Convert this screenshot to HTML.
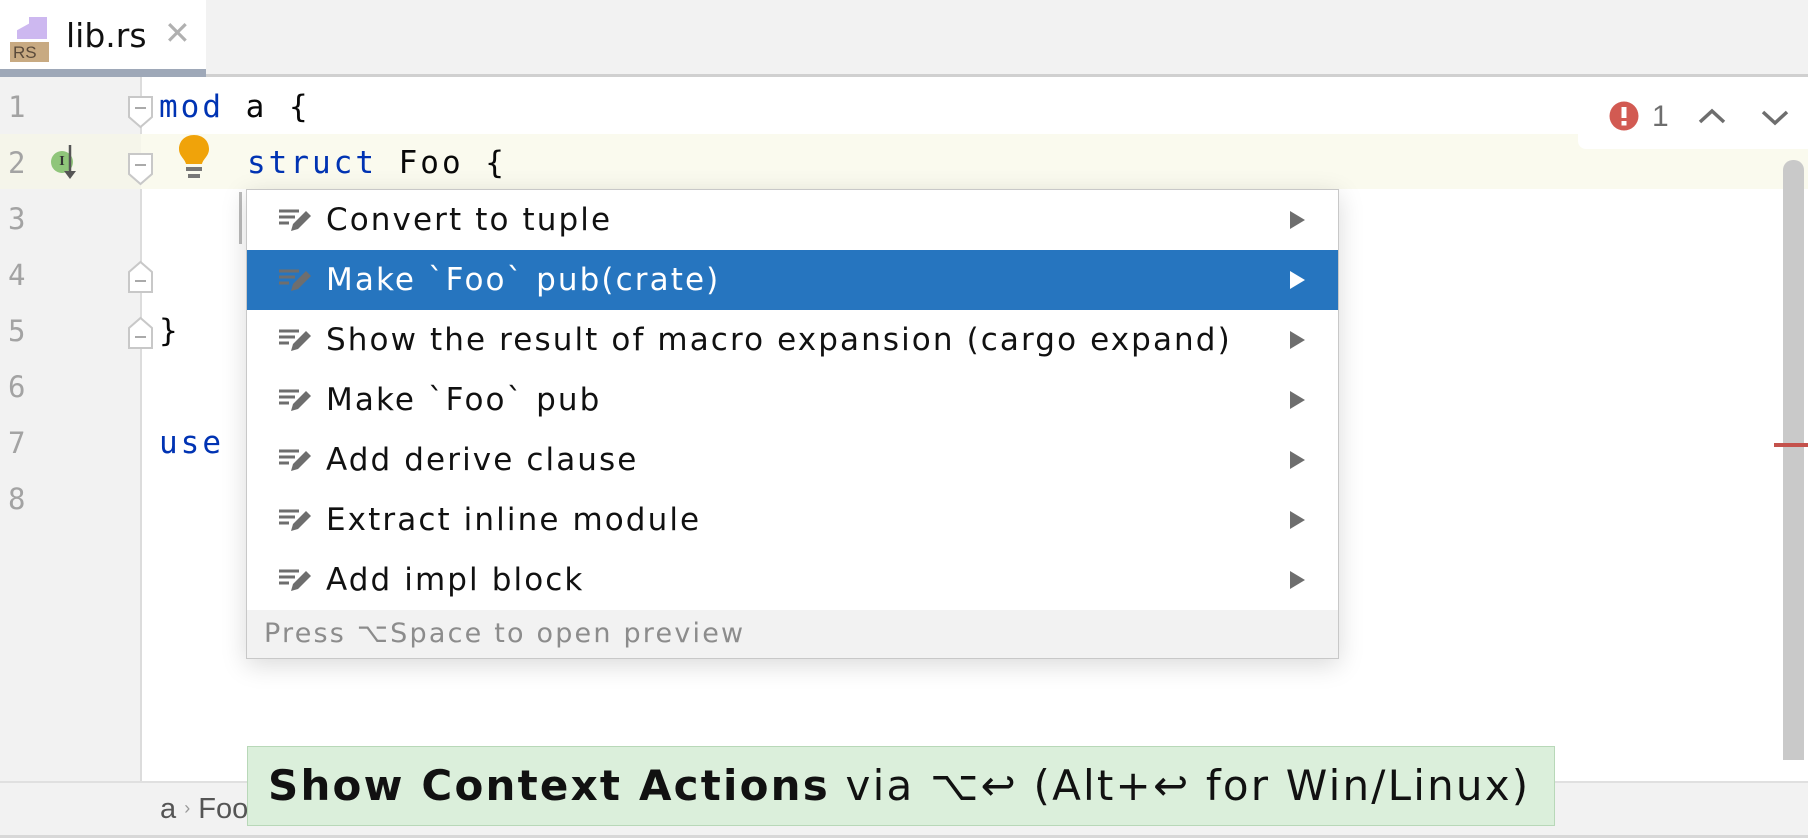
<!DOCTYPE html>
<html><head><meta charset="utf-8"><style>
*{margin:0;padding:0;box-sizing:border-box}
body{width:1808px;height:838px;overflow:hidden;background:#fff;position:relative;font-family:"Liberation Sans",sans-serif}
.abs{position:absolute}
.mono{font-family:"DejaVu Sans Mono","Liberation Mono",monospace;font-size:31px;white-space:pre;letter-spacing:3px}
.ln{position:absolute;left:8px;width:40px;color:#a3a3a3;font-family:"DejaVu Sans Mono",monospace;font-size:29px}
.item{position:absolute;left:0;width:1091px;height:60px;font-family:"DejaVu Sans",sans-serif;font-size:31px;color:#111;line-height:60px;padding-left:79px;white-space:nowrap;letter-spacing:2.1px}
.item svg.ic{position:absolute;left:30px;top:16px}
.item .ar{position:absolute;right:33px;top:21px;width:0;height:0;border-left:15px solid #6e6e6e;border-top:9px solid transparent;border-bottom:9px solid transparent}
.sel{background:#2675bf;color:#fff}
.sel .ar{border-left-color:#fff}
</style></head><body>
<div class="abs" style="left:0;top:0;width:1808px;height:77px;background:#f2f2f2"></div>
<div class="abs" style="left:0;top:74px;width:1808px;height:3px;background:#d0d0d0"></div>
<div class="abs" style="left:0;top:0;width:206px;height:71px;background:#fff"></div>
<div class="abs" style="left:0;top:69px;width:206px;height:8px;background:#9ea8b8"></div>
<div class="abs" style="left:17px;top:17px;width:30px;height:22px;background:#cdb8f0;clip-path:polygon(0 100%,100% 100%,100% 0,40% 0,40% 30%,0 60%)"></div>
<div class="abs" style="left:10px;top:42px;width:39px;height:20px;background:#c8aa82;font-size:17px;color:#5a4a3a;line-height:22px;padding-left:3px">RS</div>
<div class="abs" style="left:66px;top:16px;font-family:'DejaVu Sans',sans-serif;font-size:33px;color:#111">lib.rs</div>
<div class="abs" style="left:164px;top:14px;font-size:32px;color:#b0b0b0">✕</div>

<div class="abs" style="left:0;top:77px;width:141px;height:705px;background:#f2f2f2"></div>
<div class="abs" style="left:140px;top:77px;width:2px;height:705px;background:#dcdcdc"></div>
<div class="abs" style="left:0;top:134px;width:1808px;height:55px;background:#fafaee"></div>
<div class="abs" style="left:0;top:134px;width:141px;height:55px;background:#f5f5ea"></div>

<div class="ln" style="top:90px">1</div>
<div class="ln" style="top:146px">2</div>
<div class="ln" style="top:202px">3</div>
<div class="ln" style="top:258px">4</div>
<div class="ln" style="top:314px">5</div>
<div class="ln" style="top:370px">6</div>
<div class="ln" style="top:426px">7</div>
<div class="ln" style="top:482px">8</div>

<div class="abs" style="left:51px;top:151px;width:22px;height:22px;border-radius:50%;background:#8fc57a;font-size:14px;font-weight:bold;color:#333;text-align:center;line-height:22px;font-family:'Liberation Serif',serif">I</div>
<svg class="abs" style="left:62px;top:143px" width="18" height="38"><path d="M8 2V32" stroke="#555" stroke-width="2.5"/><path d="M2 28L8 36L14 28Z" fill="#555"/></svg>
<svg class="abs" style="left:127px;top:95px" width="28" height="34"><path d="M2 2H25V22L13.5 32L2 22Z" fill="#fff" stroke="#c8c8c8" stroke-width="2"/><path d="M8 13H19" stroke="#aaa" stroke-width="2"/></svg>
<svg class="abs" style="left:127px;top:152px" width="28" height="34"><path d="M2 2H25V22L13.5 32L2 22Z" fill="#fff" stroke="#c8c8c8" stroke-width="2"/><path d="M8 13H19" stroke="#aaa" stroke-width="2"/></svg>
<svg class="abs" style="left:127px;top:260px" width="28" height="34"><path d="M2 32H25V12L13.5 2L2 12Z" fill="#fff" stroke="#c8c8c8" stroke-width="2"/><path d="M8 21H19" stroke="#aaa" stroke-width="2"/></svg>
<svg class="abs" style="left:127px;top:316px" width="28" height="34"><path d="M2 32H25V12L13.5 2L2 12Z" fill="#fff" stroke="#c8c8c8" stroke-width="2"/><path d="M8 21H19" stroke="#aaa" stroke-width="2"/></svg>
<svg class="abs" style="left:176px;top:134px" width="36" height="46"><path d="M18 1C9 1 3 7 3 15C3 22 9 25 10 30H26C27 25 33 22 33 15C33 7 27 1 18 1Z" fill="#f0a30a"/><rect x="10" y="33" width="16" height="4" fill="#777"/><rect x="12" y="40" width="12" height="4" fill="#777"/></svg>

<div class="abs mono" style="left:159px;top:89px;color:#0033b3">mod<span style="color:#080808"> a {</span></div>
<div class="abs mono" style="left:247px;top:145px;color:#0033b3">struct<span style="color:#080808"> Foo {</span></div>
<div class="abs mono" style="left:159px;top:313px;color:#080808">}</div>
<div class="abs mono" style="left:159px;top:425px;color:#0033b3">use</div>
<div class="abs" style="left:239px;top:192px;width:3px;height:52px;background:#bbb"></div>

<div class="abs" style="left:1578px;top:77px;width:230px;height:72px;background:#fff;border-radius:0 0 0 8px"></div>
<svg class="abs" style="left:1609px;top:101px" width="30" height="30"><circle cx="15" cy="15" r="14.5" fill="#d25a52"/><rect x="12.5" y="6" width="5" height="11" fill="#fff"/><rect x="12.5" y="20" width="5" height="4.5" fill="#fff"/></svg>
<div class="abs" style="left:1652px;top:100px;font-size:30px;color:#6e6e6e">1</div>
<svg class="abs" style="left:1697px;top:106px" width="30" height="20"><path d="M3 16L15 5L27 16" fill="none" stroke="#6e6e6e" stroke-width="3.5"/></svg>
<svg class="abs" style="left:1760px;top:108px" width="30" height="20"><path d="M3 4L15 15L27 4" fill="none" stroke="#6e6e6e" stroke-width="3.5"/></svg>
<div class="abs" style="left:1783px;top:160px;width:21px;height:600px;background:#c9c9c9;border-radius:10px 10px 0 0"></div>
<div class="abs" style="left:1774px;top:443px;width:34px;height:4px;background:#c4524c"></div>

<div class="abs" style="left:246px;top:189px;width:1093px;height:470px;background:#fff;border:1px solid #c8c8c8;box-shadow:0 6px 24px rgba(0,0,0,0.15)">
<div class="item" style="top:0"><svg class="ic" width="38" height="30"><path d="M2 5H22M2 11H18M2 17H12" stroke="#6e6e6e" stroke-width="3"/><path d="M14 25L16 18L29 5L34 10L21 23Z" fill="#6e6e6e"/></svg>Convert to tuple<span class="ar"></span></div>
<div class="item sel" style="top:60px"><svg class="ic" width="38" height="30"><path d="M2 5H22M2 11H18M2 17H12" stroke="#6e6e6e" stroke-width="3"/><path d="M14 25L16 18L29 5L34 10L21 23Z" fill="#6e6e6e"/></svg>Make `Foo` pub(crate)<span class="ar"></span></div>
<div class="item" style="top:120px"><svg class="ic" width="38" height="30"><path d="M2 5H22M2 11H18M2 17H12" stroke="#6e6e6e" stroke-width="3"/><path d="M14 25L16 18L29 5L34 10L21 23Z" fill="#6e6e6e"/></svg>Show the result of macro expansion (cargo expand)<span class="ar"></span></div>
<div class="item" style="top:180px"><svg class="ic" width="38" height="30"><path d="M2 5H22M2 11H18M2 17H12" stroke="#6e6e6e" stroke-width="3"/><path d="M14 25L16 18L29 5L34 10L21 23Z" fill="#6e6e6e"/></svg>Make `Foo` pub<span class="ar"></span></div>
<div class="item" style="top:240px"><svg class="ic" width="38" height="30"><path d="M2 5H22M2 11H18M2 17H12" stroke="#6e6e6e" stroke-width="3"/><path d="M14 25L16 18L29 5L34 10L21 23Z" fill="#6e6e6e"/></svg>Add derive clause<span class="ar"></span></div>
<div class="item" style="top:300px"><svg class="ic" width="38" height="30"><path d="M2 5H22M2 11H18M2 17H12" stroke="#6e6e6e" stroke-width="3"/><path d="M14 25L16 18L29 5L34 10L21 23Z" fill="#6e6e6e"/></svg>Extract inline module<span class="ar"></span></div>
<div class="item" style="top:360px"><svg class="ic" width="38" height="30"><path d="M2 5H22M2 11H18M2 17H12" stroke="#6e6e6e" stroke-width="3"/><path d="M14 25L16 18L29 5L34 10L21 23Z" fill="#6e6e6e"/></svg>Add impl block<span class="ar"></span></div>
<div class="abs" style="left:0;top:420px;width:1091px;height:48px;background:#f2f2f2;color:#8c8c8c;font-family:'DejaVu Sans',sans-serif;font-size:27px;letter-spacing:2.2px;line-height:48px;padding-left:17px;white-space:nowrap">Press ⌥Space to open preview</div>
</div>

<div class="abs" style="left:0;top:781px;width:1808px;height:57px;background:#f2f2f2;border-top:2px solid #e0e0e0"></div>
<div class="abs" style="left:160px;top:793px;font-size:29px;color:#555">a <span style="font-size:18px;color:#999;vertical-align:4px">›</span> Foo</div>
<div class="abs" style="left:0;top:835px;width:1808px;height:3px;background:#d8d8d8"></div>

<div class="abs" style="left:247px;top:746px;width:1308px;height:80px;background:#dbefdb;border:1px solid #b8d8b8;font-family:'DejaVu Sans',sans-serif;font-size:42px;color:#111;line-height:78px;padding-left:20px;white-space:nowrap;letter-spacing:2.2px"><b>Show Context Actions</b> via ⌥↩ (Alt+↩ for Win/Linux)</div>
</body></html>
